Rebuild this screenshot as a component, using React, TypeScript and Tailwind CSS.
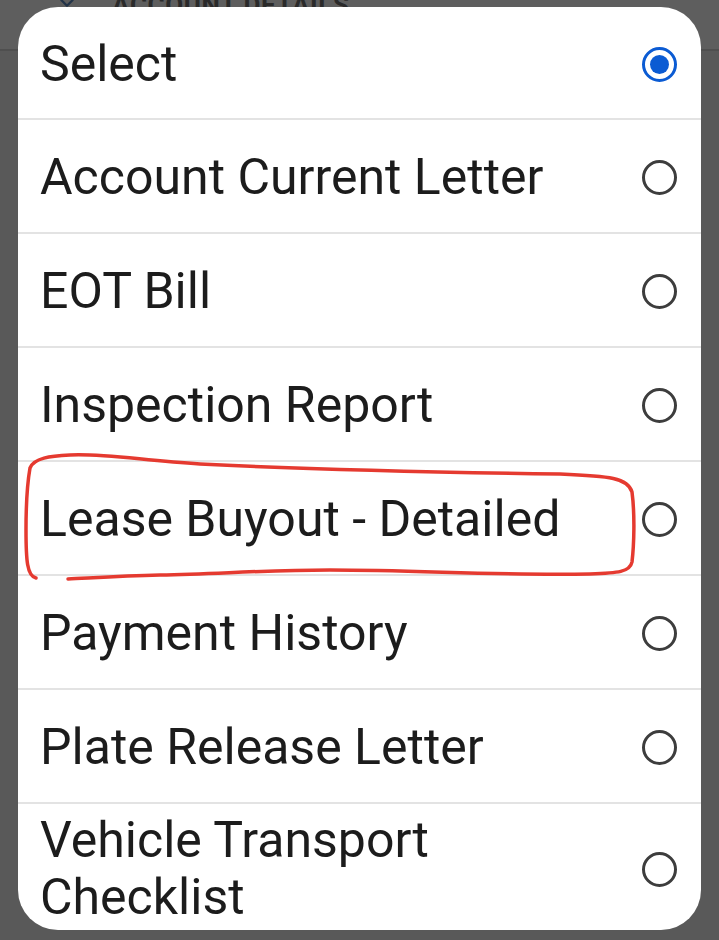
import { ChevronDown } from "lucide-react";

const options = [
  "Select",
  "Account Current Letter",
  "EOT Bill",
  "Inspection Report",
  "Lease Buyout - Detailed",
  "Payment History",
  "Plate Release Letter",
  "Vehicle Transport Checklist",
];

function Radio({ checked }: { checked: boolean }) {
  if (checked) {
    return (
      <span className="flex h-[35px] w-[35px] shrink-0 items-center justify-center rounded-full border-[3.5px] border-[#0b5bd3]">
        <span className="h-[19px] w-[19px] rounded-full bg-[#0b5bd3]" />
      </span>
    );
  }
  return (
    <span className="h-[35px] w-[35px] shrink-0 rounded-full border-[3px] border-[#3d3d3d]" />
  );
}

function OptionRow({ label, checked, last }: { label: string; checked: boolean; last: boolean }) {
  return (
    <div
      className={`flex items-center justify-between pl-[22px] pr-[24px] ${
        last ? "h-[126px] pt-[4px]" : "h-[114px] border-b-2 border-[#e3e3e3] pt-[3px]"
      }`}
    >
      <span className={`text-[50px] leading-[57px] text-[#1c1c1c] ${last ? "w-[420px]" : ""}`}>
        {label}
      </span>
      <Radio checked={checked} />
    </div>
  );
}

export default function App() {
  return (
    <div
      className="relative h-[940px] w-[719px] overflow-hidden bg-[#595959]"
      style={{ fontFamily: "Roboto, 'Noto Sans', sans-serif" }}
    >
      {/* page behind the dialog */}
      <div className="flex h-[51px] items-start gap-[34px] border-b-2 border-[#4f4f4f] bg-[#5e5e5e] pl-[56px]">
        <ChevronDown className="-mt-[8px] h-[22px] w-[22px] text-[#233449]" strokeWidth={2.5} />
        <span className="-mt-[14px] text-[26px] font-bold tracking-wide text-[#2a2a2a]">ACCOUNT DETAILS</span>
      </div>

      {/* dialog */}
      <div className="absolute left-[18px] top-[7px] h-[923px] w-[683px] overflow-hidden rounded-[40px] bg-white">
        <div className="flex h-[113px] items-center justify-between border-b-2 border-[#e3e3e3] pl-[22px] pr-[24px] pt-[3px]">
          <span className="text-[50px] leading-[57px] text-[#1c1c1c]">{options[0]}</span>
          <Radio checked />
        </div>
        {options.slice(1).map((o, i) => (
          <OptionRow key={o} label={o} checked={false} last={i === options.length - 2} />
        ))}
      </div>

      {/* red hand-drawn annotation */}
      <svg className="pointer-events-none absolute inset-0" width="719" height="940" viewBox="0 0 719 940">
        <path
          d="M36 578 C27 576 26 560 26 530 C26 505 27 485 30 468 C34 458 50 456 70 455 C100 453 140 460 200 464 C300 469 420 472 560 474 C610 476 628 478 632 492 C635 515 634 545 632 562 C630 572 618 573 590 574 C500 576 420 570 330 570 C260 570 220 574 160 575 C120 576 90 578 68 579"
          fill="none"
          stroke="#e53a30"
          strokeWidth="3.5"
          strokeLinecap="round"
        />
      </svg>
    </div>
  );
}
